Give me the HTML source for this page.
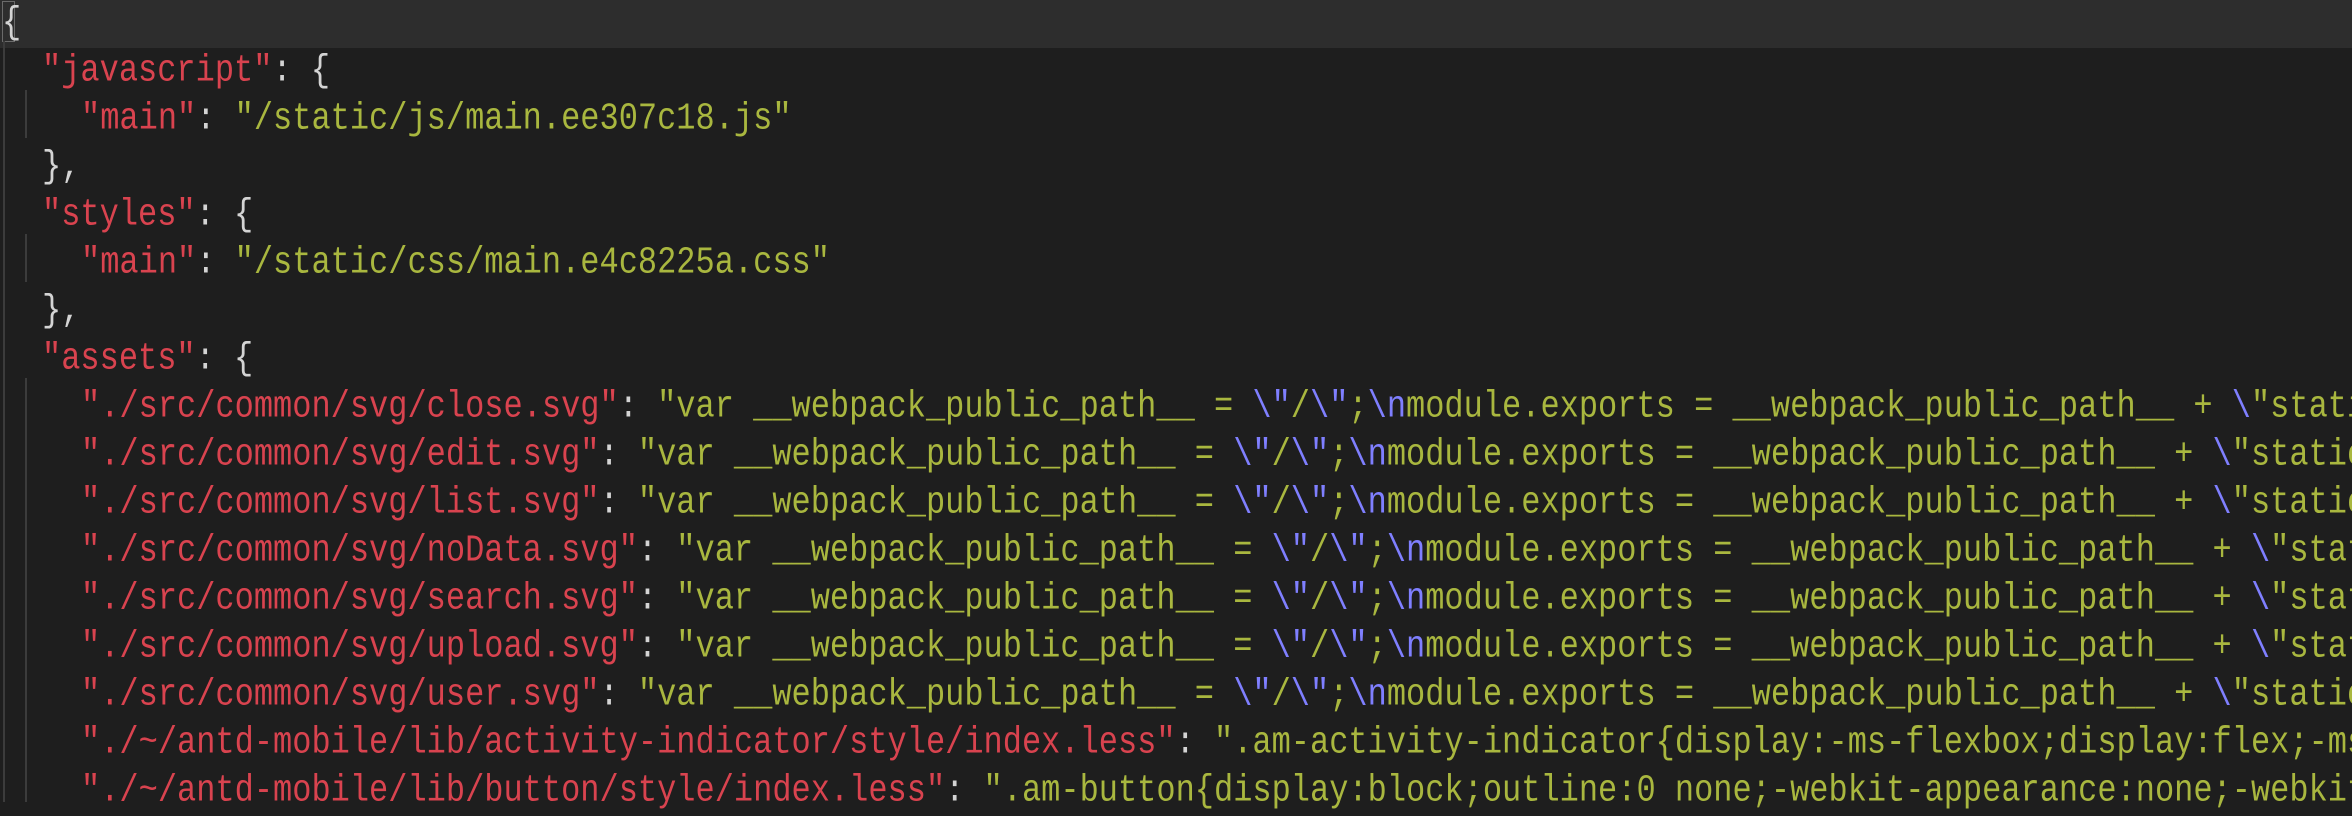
<!DOCTYPE html>
<html><head><meta charset="utf-8"><style>
html,body{margin:0;padding:0;}
body{width:2352px;height:802px;overflow:hidden;background:#1e1e1e;position:relative;font-family:"Liberation Mono","DejaVu Sans Mono",monospace;}
.l{position:absolute;left:0;height:48px;line-height:48px;width:2352px;white-space:pre;font-size:32px;color:#d4d4d4;overflow:hidden;}
.l span.t{display:inline-block;transform:scaleY(1.2);transform-origin:50% 60%;}
.k{color:#d9434f}.s{color:#a9b73f}.e{color:#7f7fff}.p{color:#d4d4d4}
.hl{background:#2d2d2d}
.g{position:absolute;width:2px;background:#3c3c3c;}
</style></head><body>
<div class="l hl" style="top:0"></div>
<div style="position:absolute;left:2px;top:1px;width:11px;height:39px;border:1px solid #6a6a6a;"></div>
<div class="g" style="left:3px;top:41px;height:761px"></div>
<div class="g" style="left:25px;top:90px;height:48px"></div>
<div class="g" style="left:25px;top:234px;height:48px"></div>
<div class="g" style="left:25px;top:378px;height:424px"></div>
<div class="l" style="top:0"><span class="t" style="padding-left:2px">{</span></div>
<div class="l" style="top:48px"><span class="t" style="padding-left:42px"><span class="k">"javascript"</span>: {</span></div>
<div class="l" style="top:96px"><span class="t" style="padding-left:81px"><span class="k">"main"</span>: <span class="s">"/static/js/main.ee307c18.js"</span></span></div>
<div class="l" style="top:144px"><span class="t" style="padding-left:42px">},</span></div>
<div class="l" style="top:192px"><span class="t" style="padding-left:42px"><span class="k">"styles"</span>: {</span></div>
<div class="l" style="top:240px"><span class="t" style="padding-left:81px"><span class="k">"main"</span>: <span class="s">"/static/css/main.e4c8225a.css"</span></span></div>
<div class="l" style="top:288px"><span class="t" style="padding-left:42px">},</span></div>
<div class="l" style="top:336px"><span class="t" style="padding-left:42px"><span class="k">"assets"</span>: {</span></div>
<div class="l" style="top:384px"><span class="t" style="padding-left:81px"><span class="k">"./src/common/svg/close.svg"</span>: <span class="s">"var __webpack_public_path__ = <span class="e">\"</span>/<span class="e">\"</span>;<span class="e">\n</span>module.exports = __webpack_public_path__ + <span class="e">\</span>"static/media/close.svg</span></span></div>
<div class="l" style="top:432px"><span class="t" style="padding-left:81px"><span class="k">"./src/common/svg/edit.svg"</span>: <span class="s">"var __webpack_public_path__ = <span class="e">\"</span>/<span class="e">\"</span>;<span class="e">\n</span>module.exports = __webpack_public_path__ + <span class="e">\</span>"static/media/edit.svg</span></span></div>
<div class="l" style="top:480px"><span class="t" style="padding-left:81px"><span class="k">"./src/common/svg/list.svg"</span>: <span class="s">"var __webpack_public_path__ = <span class="e">\"</span>/<span class="e">\"</span>;<span class="e">\n</span>module.exports = __webpack_public_path__ + <span class="e">\</span>"static/media/list.svg</span></span></div>
<div class="l" style="top:528px"><span class="t" style="padding-left:81px"><span class="k">"./src/common/svg/noData.svg"</span>: <span class="s">"var __webpack_public_path__ = <span class="e">\"</span>/<span class="e">\"</span>;<span class="e">\n</span>module.exports = __webpack_public_path__ + <span class="e">\</span>"static/media/noData.svg</span></span></div>
<div class="l" style="top:576px"><span class="t" style="padding-left:81px"><span class="k">"./src/common/svg/search.svg"</span>: <span class="s">"var __webpack_public_path__ = <span class="e">\"</span>/<span class="e">\"</span>;<span class="e">\n</span>module.exports = __webpack_public_path__ + <span class="e">\</span>"static/media/search.svg</span></span></div>
<div class="l" style="top:624px"><span class="t" style="padding-left:81px"><span class="k">"./src/common/svg/upload.svg"</span>: <span class="s">"var __webpack_public_path__ = <span class="e">\"</span>/<span class="e">\"</span>;<span class="e">\n</span>module.exports = __webpack_public_path__ + <span class="e">\</span>"static/media/upload.svg</span></span></div>
<div class="l" style="top:672px"><span class="t" style="padding-left:81px"><span class="k">"./src/common/svg/user.svg"</span>: <span class="s">"var __webpack_public_path__ = <span class="e">\"</span>/<span class="e">\"</span>;<span class="e">\n</span>module.exports = __webpack_public_path__ + <span class="e">\</span>"static/media/user.svg</span></span></div>
<div class="l" style="top:720px"><span class="t" style="padding-left:81px"><span class="k">"./~/antd-mobile/lib/activity-indicator/style/index.less"</span>: <span class="s">".am-activity-indicator{display:-ms-flexbox;display:flex;-ms-flex-align:center</span></span></div>
<div class="l" style="top:768px"><span class="t" style="padding-left:81px"><span class="k">"./~/antd-mobile/lib/button/style/index.less"</span>: <span class="s">".am-button{display:block;outline:0 none;-webkit-appearance:none;-webkit-box-sizing</span></span></div>
</body></html>
